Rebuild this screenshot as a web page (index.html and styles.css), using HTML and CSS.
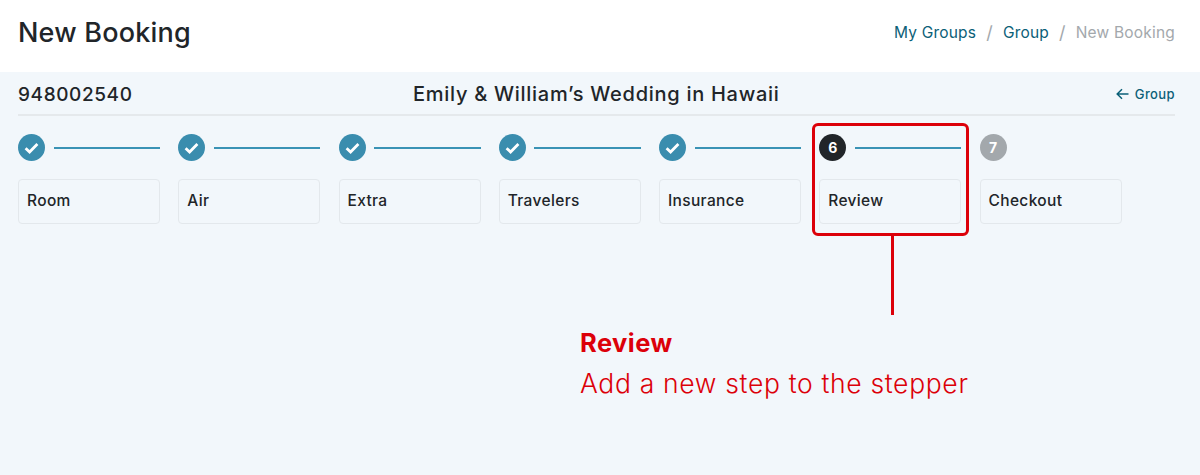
FILE: index.html
```html
<!DOCTYPE html>
<html lang="en">
<head>
    <meta charset="UTF-8">
    <meta name="viewport" content="width=device-width, initial-scale=1.0">
    <title>New Booking</title>
    <link rel="stylesheet" href="styles.css">
</head>
<body>

<header class="page-header">
    <h1>New Booking</h1>
    <nav class="breadcrumb">
        <a href="#">My Groups</a>
        <span class="sep">/</span>
        <a href="#">Group</a>
        <span class="sep">/</span>
        <span class="current">New Booking</span>
    </nav>
</header>

<div class="content">
    <div class="title-row">
        <span class="group-id">948002540</span>
        <span class="group-name">Emily &amp; William’s Wedding in Hawaii</span>
        <a class="back-link" href="#">
            <svg width="13" height="12" viewBox="0 0 13 12" fill="none" stroke="currentColor" stroke-width="1.5"><path d="M12.5 6H1.5M6 1.2 1.2 6 6 10.8"/></svg>
            Group
        </a>
    </div>

    <ol class="stepper">
        <li class="step">
            <div class="step-top">
                <span class="dot done"><svg width="15" height="12" viewBox="0 0 15 12" fill="none" stroke="#fff" stroke-width="2.8"><path d="M1.6 6.2 5.6 10 13.4 2"/></svg></span>
                <span class="bar"></span>
            </div>
            <div class="step-card">Room</div>
        </li>
        <li class="step">
            <div class="step-top">
                <span class="dot done"><svg width="15" height="12" viewBox="0 0 15 12" fill="none" stroke="#fff" stroke-width="2.8"><path d="M1.6 6.2 5.6 10 13.4 2"/></svg></span>
                <span class="bar"></span>
            </div>
            <div class="step-card">Air</div>
        </li>
        <li class="step">
            <div class="step-top">
                <span class="dot done"><svg width="15" height="12" viewBox="0 0 15 12" fill="none" stroke="#fff" stroke-width="2.8"><path d="M1.6 6.2 5.6 10 13.4 2"/></svg></span>
                <span class="bar"></span>
            </div>
            <div class="step-card">Extra</div>
        </li>
        <li class="step">
            <div class="step-top">
                <span class="dot done"><svg width="15" height="12" viewBox="0 0 15 12" fill="none" stroke="#fff" stroke-width="2.8"><path d="M1.6 6.2 5.6 10 13.4 2"/></svg></span>
                <span class="bar"></span>
            </div>
            <div class="step-card">Travelers</div>
        </li>
        <li class="step">
            <div class="step-top">
                <span class="dot done"><svg width="15" height="12" viewBox="0 0 15 12" fill="none" stroke="#fff" stroke-width="2.8"><path d="M1.6 6.2 5.6 10 13.4 2"/></svg></span>
                <span class="bar"></span>
            </div>
            <div class="step-card">Insurance</div>
        </li>
        <li class="step">
            <div class="step-top">
                <span class="dot active">6</span>
                <span class="bar"></span>
            </div>
            <div class="step-card">Review</div>
            <div class="callout-box"></div>
            <div class="callout-line"></div>
        </li>
        <li class="step">
            <div class="step-top">
                <span class="dot todo">7</span>
            </div>
            <div class="step-card">Checkout</div>
        </li>
    </ol>

    <div class="callout-text">
        <strong>Review</strong>
        <p>Add a new step to the stepper</p>
    </div>
</div>

</body>
</html>
```

FILE: styles.css
```css
* {
    box-sizing: border-box;
}

body {
    margin: 0;
    font-family: 'Inter', 'Open Sans', sans-serif;
    background-color: #f2f7fb;
    color: #212529;
}

.page-header {
    height: 72px;
    padding: 0 25px 8px 18px;
    background-color: #fff;
    display: flex;
    align-items: center;
    justify-content: space-between;
}

.page-header h1 {
    margin: 0;
    font-size: 27px;
    font-weight: 500;
    letter-spacing: 0.2px;
}

.breadcrumb {
    display: flex;
    align-items: center;
    gap: 10px;
    font-size: 15.5px;
    letter-spacing: 0.2px;
}

.breadcrumb a {
    color: #0b6078;
    text-decoration: none;
}

.breadcrumb .sep {
    color: #a3a8ac;
    font-size: 18px;
}

.breadcrumb .current {
    color: #a3a8ac;
}

.content {
    position: relative;
    height: 403px;
    padding: 0 25px 0 18px;
}

.title-row {
    height: 44px;
    padding-top: 2px;
    border-bottom: 2px solid #e5e9ec;
    display: flex;
    align-items: center;
    justify-content: space-between;
    position: relative;
}

.group-id {
    font-size: 19px;
    font-weight: 450;
    letter-spacing: 0.6px;
}

.group-name {
    position: absolute;
    left: 395px;
    font-size: 20px;
    font-weight: 450;
    letter-spacing: 0.72px;
}

.back-link {
    display: flex;
    align-items: center;
    gap: 6px;
    font-size: 13px;
    font-weight: 500;
    letter-spacing: 0.4px;
    color: #0b6078;
    text-decoration: none;
}

.stepper {
    list-style: none;
    margin: 18px 0 0;
    padding: 0;
    display: flex;
    gap: 18.25px;
}

.step {
    position: relative;
    width: 142px;
}

.step-top {
    height: 27px;
    display: flex;
    align-items: center;
    gap: 8.5px;
    margin-bottom: 18px;
}

.dot {
    width: 27px;
    height: 27px;
    flex: none;
    border-radius: 50%;
    display: flex;
    align-items: center;
    justify-content: center;
    font-size: 14px;
    font-weight: 700;
    color: #fff;
}

.dot.done {
    background-color: #3a8dae;
}

.dot.active {
    background-color: #212529;
}

.dot.todo {
    background-color: #a3a8ac;
}

.bar {
    flex: 1;
    height: 2px;
    background-color: #3a93b5;
}

.step-card {
    height: 45px;
    padding: 0 8px 2px;
    border: 1px solid #e3e8ec;
    border-radius: 4px;
    display: flex;
    align-items: center;
    font-size: 15.5px;
    font-weight: 450;
    letter-spacing: 0.35px;
}

.callout-box {
    position: absolute;
    left: -7px;
    right: -8px;
    top: -11px;
    height: 113px;
    border: 3px solid #dc0009;
    border-radius: 6px;
}

.callout-line {
    position: absolute;
    left: 72px;
    top: 101px;
    width: 3px;
    height: 80px;
    background-color: #dc0009;
}

.callout-text {
    position: absolute;
    left: 580px;
    top: 253px;
    color: #dc0009;
}

.callout-text strong {
    display: block;
    line-height: 36px;
    font-size: 25.5px;
    font-weight: 700;
    letter-spacing: 0.45px;
}

.callout-text p {
    margin: 2px 0 0;
    line-height: 40px;
    font-size: 26.5px;
    font-weight: 300;
    letter-spacing: 0.66px;
}
```
